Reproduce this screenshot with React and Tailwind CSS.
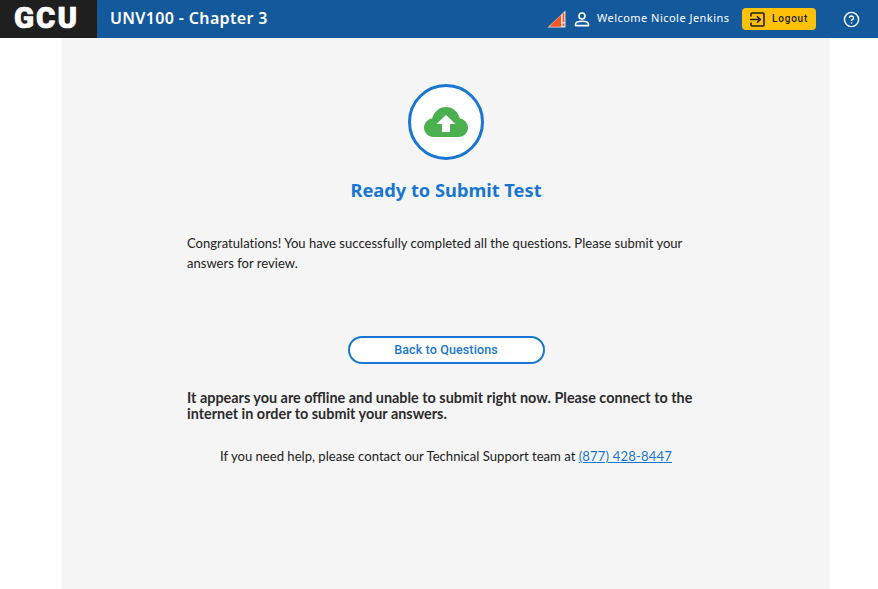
import { CircleHelp } from 'lucide-react';

const sans = { fontFamily: 'Lato' };

function SignalIcon() {
  return (
    <svg width="19" height="18" viewBox="0 0 19 18" className="shrink-0">
      <path d="M0.5 17.5 L18.5 0.5 V17.5 Z" fill="#f3d9d0" />
      <path d="M2 16.8 L14 5 V16.8 Z" fill="#f0582b" />
      <rect x="15.7" y="3.5" width="1.6" height="8.5" fill="#f0582b" />
      <rect x="15.7" y="13.5" width="1.6" height="2.5" fill="#f0582b" />
    </svg>
  );
}

function PersonIcon() {
  return (
    <svg width="16" height="15" viewBox="0 0 16 15" fill="none" stroke="#fff" strokeWidth="1.6" className="shrink-0">
      <circle cx="8" cy="4" r="3" />
      <path d="M1.5 13.6 V12.2 C1.5 10.2 5 9.2 8 9.2 C11 9.2 14.5 10.2 14.5 12.2 V13.6 Z" strokeLinejoin="round" />
    </svg>
  );
}

function LogoutIcon() {
  return (
    <svg width="15" height="15" viewBox="0 0 15 15" fill="none" stroke="#1f1f1f" strokeWidth="1.6" className="shrink-0">
      <path d="M1 4.5 V2 C1 1.4 1.4 1 2 1 H13 C13.6 1 14 1.4 14 2 V13 C14 13.6 13.6 14 13 14 H2 C1.4 14 1 13.6 1 13 V10.5" />
      <path d="M0 7.5 H10 M7 4.2 L10.3 7.5 L7 10.8" />
    </svg>
  );
}

function CloudIcon() {
  return (
    <svg width="44" height="30" viewBox="0 0 44 30">
      <path
        d="M9.5 30 C4 30 0 25.8 0 20.8 C0 15.8 3.6 12 8.2 11.4 C10 4.6 15.4 0 22 0 C28.6 0 34 4.6 35.8 11.4 C40.4 12 44 15.8 44 20.8 C44 25.8 40 30 34.5 30 Z"
        fill="#4caf50"
      />
      <path d="M22 8 L31.5 17 H26 V25 H18 V17 H12.5 Z" fill="#fff" />
    </svg>
  );
}

export default function App() {
  return (
    <div className="h-[589px] overflow-hidden bg-white text-[#212121]" style={sans}>
      <header className="h-[38px] flex items-center bg-[#15599d] text-white">
        <div className="w-[97px] h-full bg-[#1f1f1f] flex items-center pl-[14px]">
          <span className="text-[29.5px] font-black leading-none tracking-[2px] [font-family:Roboto,sans-serif] [-webkit-text-stroke:0.7px_white]">GCU</span>
        </div>
        <h1 className="ml-[13px] pb-[2px] text-[16px] font-semibold tracking-[0.35px] [font-family:'Noto_Sans',sans-serif]">UNV100 - Chapter 3</h1>
        <div className="ml-auto flex items-center">
          <SignalIcon />
          <div className="ml-[8px]"><PersonIcon /></div>
          <span className="ml-[7px] pb-[2px] w-[132px] whitespace-nowrap text-[11px] tracking-[0.47px] [font-family:'Noto_Sans',sans-serif]">Welcome Nicole Jenkins</span>
          <button className="ml-[13px] w-[74px] h-[22px] rounded-[4px] bg-[#ffc107] text-[#1f1f1f] flex items-center pl-[8px] gap-[7px]">
            <LogoutIcon />
            <span className="pb-[1px] text-[10px] font-medium tracking-[0.8px] [font-family:Roboto,sans-serif]">Logout</span>
          </button>
          <CircleHelp className="ml-[27px] mr-[18px] w-[17px] h-[17px]" strokeWidth={2} />
        </div>
      </header>

      <main className="mx-[62px] w-[768px] h-[551px] bg-[#f5f5f5] flex flex-col items-center">
        <div className="mt-[46px] w-[76px] h-[76px] rounded-full border-[3px] border-[#1976d2] bg-white flex items-center justify-center">
          <CloudIcon />
        </div>
        <h2 className="mt-[17px] text-[18.25px] leading-[26px] font-bold text-[#1976d2] [font-family:'Noto_Sans',sans-serif]">Ready to Submit Test</h2>
        <div className="mt-[30px] w-[518px]">
          <p className="text-[13px] leading-[20px] tracking-[0.03px]">
            Congratulations! You have successfully completed all the questions. Please submit your answers for review.
          </p>
        </div>
        <button className="mt-[63px] w-[197px] h-[28px] rounded-full border-2 border-[#1976d2] bg-white text-[12.5px] tracking-[0.13px] font-medium text-[#1976d2] [font-family:Roboto,sans-serif]">
          Back to Questions
        </button>
        <p className="mt-[26px] w-[518px] text-[14.4px] leading-[16px] font-bold text-[#2b2b2b]">
          It appears you are offline and unable to submit right now. Please connect to the internet in order to submit your answers.
        </p>
        <p className="mt-[25px] text-[13.1px] leading-[18px]">
          If you need help, please contact our Technical Support team at{' '}
          <a href="#" className="text-[#1976d2] underline tracking-[0.15px]">(877) 428-8447</a>
        </p>
      </main>
    </div>
  );
}
